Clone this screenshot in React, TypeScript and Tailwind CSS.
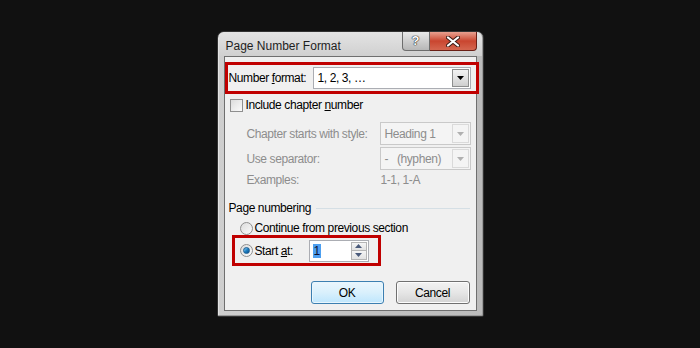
import React from "react";

function Arrow({ color = "#000" }: { color?: string }) {
  return (
    <svg width="7" height="4" viewBox="0 0 7 4">
      <path d="M0 0 H7 L3.5 4 Z" fill={color} />
    </svg>
  );
}

function Combo({ text, disabled, w }: { text: string; disabled?: boolean; w: string }) {
  return (
    <div
      className={`${w} h-full flex items-center border ${
        disabled ? "border-[#c9c9c9] bg-[#f4f4f4] text-[#8d8d8d]" : "border-[#abadb3] bg-white text-black"
      }`}
    >
      <span className="flex-1 pl-[4px] whitespace-pre">{text}</span>
      <div
        className={`w-[17px] h-[calc(100%-2px)] mr-[1px] flex items-center justify-center border ${
          disabled
            ? "border-[#dadada] bg-[#f4f4f4]"
            : "border-[#8e8f8f] bg-gradient-to-b from-[#f2f2f2] via-[#e3e3e3] to-[#cfcfcf]"
        }`}
      >
        <Arrow color={disabled ? "#b0b0b0" : "#000"} />
      </div>
    </div>
  );
}

function Radio({ checked }: { checked?: boolean }) {
  return (
    <div className="w-[13px] h-[13px] rounded-full border border-[#8f8f8f] bg-gradient-to-br from-[#dcdcdc] to-[#fbfbfb] flex items-center justify-center shrink-0">
      {checked && (
        <div className="w-[7px] h-[7px] rounded-full bg-gradient-to-br from-[#8fd3f5] via-[#1d82c4] to-[#0d4d8a] border border-[#1a5d93]" />
      )}
    </div>
  );
}

export default function App() {
  return (
    <div className="w-[700px] h-[348px] bg-[#111111] flex items-center justify-center font-['Liberation_Sans',Arial,sans-serif] text-[12px] leading-[14px] text-black">
      <div className="w-[267px] h-[286px] rounded-t-[7px] rounded-b-[2px] border border-[#333333] bg-gradient-to-r from-[#cfcfcf] via-[#c2c2c2] to-[#bcbcbc] shadow-[inset_1px_1px_0_#e4e4e4,inset_-1px_-1px_0_#9a9a9a] flex flex-col px-[6px] pb-[5px]">
        <div className="h-[24px] flex items-start bg-gradient-to-b from-[#e4e4e4] to-[#d0d0d0] -mx-[5px] px-[5px] rounded-t-[6px]">
          <span className="mt-[7px] ml-[2px] text-[#1e1e1e]">Page Number Format</span>
          <div className="ml-auto flex">
            <div className="w-[28px] h-[19px] rounded-bl-[4px] border border-t-0 border-[#6d6d6d] bg-gradient-to-b from-[#e9e9e9] via-[#cfcfcf] to-[#b7b7b7] flex items-center justify-center text-white font-bold text-[13px] [text-shadow:0_0_1px_#222,0_0_1px_#222,0_0_1px_#222]">
              ?
            </div>
            <div className="w-[47px] h-[19px] rounded-br-[4px] border border-t-0 border-l-0 border-[#6a1f16] bg-gradient-to-b from-[#e8a090] via-[#c9452f] to-[#d4664f] flex items-center justify-center">
              <svg width="14" height="11" viewBox="0 0 14 11">
                <path d="M2 1.5 L12 9.5 M12 1.5 L2 9.5" stroke="#3a1a14" strokeWidth="4" strokeLinecap="round" />
                <path d="M2 1.5 L12 9.5 M12 1.5 L2 9.5" stroke="#ffffff" strokeWidth="2.2" strokeLinecap="round" />
              </svg>
            </div>
          </div>
        </div>
        <div className="flex-1 border border-[#6f6f6f] bg-[#f0f0f0] flex flex-col tracking-[-0.4px]">
          {/* Number format */}
          <div className="mt-[5px] -mr-[3px] h-[32px] border-[3px] border-[#c00000] flex items-center">
            <span className="w-[85px] pl-[1px] shrink-0">
              Number <span className="underline">f</span>ormat:
            </span>
            <div className="h-[22px]">
              <Combo text="1, 2, 3, …" w="w-[158px]" />
            </div>
          </div>
          {/* Include chapter number */}
          <div className="mt-[4px] h-[14px] flex items-center pl-[5px] gap-[3px]">
            <div className="w-[13px] h-[13px] border border-[#8f8f8f] bg-gradient-to-br from-[#dcdcdc] to-[#fbfbfb] shrink-0" />
            <span>
              Include chapter <span className="underline">n</span>umber
            </span>
          </div>
          <div className="mt-[10px] h-[23px] flex items-center pl-[22px] text-[#8d8d8d]">
            <span className="w-[133px] shrink-0">Chapter starts with style:</span>
            <Combo text="Heading 1" disabled w="w-[91px]" />
          </div>
          <div className="mt-[2px] h-[23px] flex items-center pl-[22px] text-[#8d8d8d]">
            <span className="w-[133px] shrink-0">Use separator:</span>
            <Combo text="-   (hyphen)" disabled w="w-[91px]" />
          </div>
          <div className="mt-[3px] h-[14px] flex items-center pl-[22px] text-[#8d8d8d]">
            <span className="w-[134px] shrink-0">Examples:</span>
            <span>1-1, 1-A</span>
          </div>
          {/* Page numbering */}
          <div className="mt-[14px] h-[14px] flex items-center pl-[4px] pr-[6px]">
            <span>Page numbering</span>
            <div className="flex-1 h-px bg-[#d5dfe5] ml-[5px]" />
          </div>
          <div className="mt-[6px] h-[14px] flex items-center pl-[15px] gap-[2px]">
            <Radio />
            <span>Continue from previous section</span>
          </div>
          <div className="ml-[7px] w-[149px] h-[31px] border-[3px] border-[#c00000] flex items-center pl-[5px]">
            <Radio checked />
            <span className="ml-[2px] w-[54px] shrink-0">
              Start <span className="underline">a</span>t:
            </span>
            <div className="w-[60px] h-[22px] border border-[#abadb3] bg-white flex items-center">
              <span className="ml-[3px] bg-[#4d9ff0] text-[#101030] px-[1px] leading-[14px]">1</span>
              <div className="ml-auto mr-[1px] w-[16px] h-[18px] flex flex-col">
                <div className="flex-1 border border-[#b5b5b5] bg-gradient-to-b from-[#f5f5f5] to-[#e2e2e2] flex items-center justify-center">
                  <svg width="7" height="4" viewBox="0 0 7 4"><path d="M0 4 H7 L3.5 0 Z" fill="#4a5a7a" /></svg>
                </div>
                <div className="flex-1 border border-t-0 border-[#b5b5b5] bg-gradient-to-b from-[#f5f5f5] to-[#e2e2e2] flex items-center justify-center">
                  <svg width="7" height="4" viewBox="0 0 7 4"><path d="M0 0 H7 L3.5 4 Z" fill="#4a5a7a" /></svg>
                </div>
              </div>
            </div>
          </div>
          {/* Buttons */}
          <div className="mt-[15px] flex justify-end gap-[12px] pr-[6px]">
            <div className="w-[73px] h-[23px] rounded-[3px] border border-[#3c7fb1] bg-gradient-to-b from-[#eaf6fd] via-[#d9f0fc] to-[#bee6fd] shadow-[inset_0_0_0_1px_#e8f6fd] flex items-center justify-center">
              OK
            </div>
            <div className="w-[74px] h-[23px] rounded-[3px] border border-[#707070] bg-gradient-to-b from-[#f2f2f2] via-[#e6e6e6] to-[#d3d3d3] shadow-[inset_0_0_0_1px_#fcfcfc] flex items-center justify-center">
              Cancel
            </div>
          </div>
        </div>
      </div>
    </div>
  );
}
